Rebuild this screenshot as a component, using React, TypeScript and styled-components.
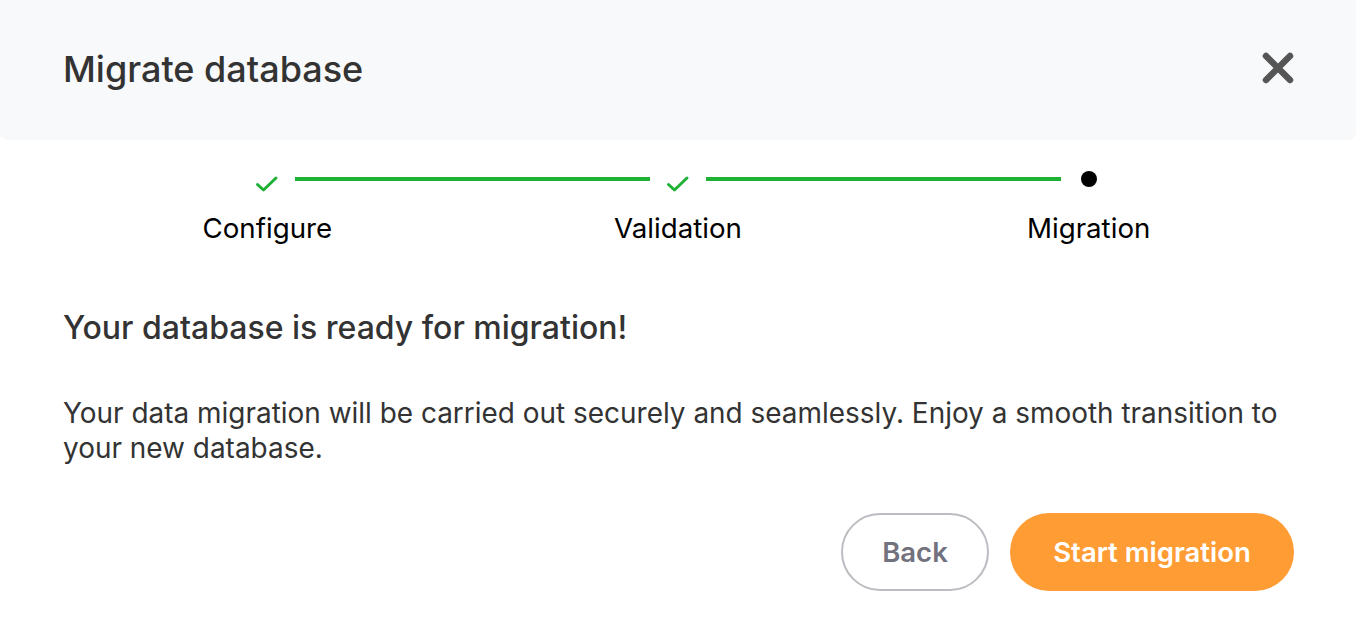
import React from "react";
import styled, { createGlobalStyle } from "styled-components";

const Global = createGlobalStyle`
  html, body { margin: 0; padding: 0; background: #ffffff; }
  body { font-family: Inter, "Noto Sans", sans-serif; -webkit-font-smoothing: antialiased; }
  * { box-sizing: border-box; }
`;

const Dialog = styled.div`
  width: 1356px;
  height: 618px;
  background: #fff;
  display: flex;
  flex-direction: column;
`;

const Header = styled.header`
  height: 140px;
  flex: none;
  background: #f8f9fa;
  border-radius: 0 0 8px 8px;
  display: flex;
  align-items: center;
  justify-content: space-between;
  padding: 0 61px 0 63px;
`;

const Title = styled.h1`
  margin: 0;
  font-size: 36px;
  font-weight: 500;
  color: #333333;
  line-height: 44px;
  padding-bottom: 2px;
`;

const CloseButton = styled.button`
  border: none;
  background: none;
  padding: 0;
  width: 34px;
  height: 34px;
  display: flex;
  align-items: center;
  justify-content: center;
  cursor: pointer;
  margin-bottom: 4px;
`;

const Body = styled.div`
  padding: 0 62px;
  display: flex;
  flex-direction: column;
`;

const Stepper = styled.ol`
  list-style: none;
  margin: 0;
  padding: 0;
  display: grid;
  grid-template-columns: repeat(3, 1fr);
  margin-top: 25px;
`;

const Step = styled.li`
  position: relative;
  display: flex;
  flex-direction: column;
  align-items: center;
`;

const IconWrap = styled.div`
  height: 28px;
  width: 40px;
  display: flex;
  align-items: center;
  justify-content: center;
`;

const Connector = styled.div`
  position: absolute;
  top: 12px;
  left: calc(50% + 28px);
  right: calc(-50% + 28px);
  height: 4px;
  background: #1fb136;
`;

const Dot = styled.span`
  width: 16px;
  height: 16px;
  border-radius: 50%;
  background: #000;
`;

const StepLabel = styled.span`
  margin-top: 18px;
  font-size: 27.7px;
  font-weight: 400;
  color: #000;
  line-height: 34px;
  white-space: nowrap;
`;

const Heading = styled.h2`
  margin: 63px 0 0 1px;
  font-size: 32px;
  font-weight: 500;
  color: #333333;
  line-height: 40px;
`;

const Paragraph = styled.p`
  margin: 47.5px 0 0 1px;
  font-size: 27.95px;
  line-height: 35px;
  color: #333333;
  font-weight: 400;
`;

const Actions = styled.div`
  display: flex;
  justify-content: flex-end;
  gap: 21px;
  margin-top: 47.5px;
`;

const Button = styled.button<{ $primary?: boolean }>`
  height: 78px;
  border-radius: 39px;
  font-family: Inter, "Noto Sans", sans-serif;
  font-size: 27.5px;
  font-weight: 600;
  cursor: pointer;
  padding: 0 30px;
  border: ${(p) => (p.$primary ? "none" : "2px solid #bcbcc2")};
  background: ${(p) => (p.$primary ? "#ff9c33" : "#ffffff")};
  color: ${(p) => (p.$primary ? "#ffffff" : "#72727e")};
  width: ${(p) => (p.$primary ? "284px" : "148px")};
`;

const Check = () => (
  <svg width="24" height="18" viewBox="0 0 24 18" style={{ marginTop: 10 }}>
    <path d="M2.5 9.5 L8.5 15 L21 3" fill="none" stroke="#1fb136" strokeWidth="3" strokeLinecap="round" strokeLinejoin="round" />
  </svg>
);

const steps = [
  { label: "Configure", done: true },
  { label: "Validation", done: true },
  { label: "Migration", done: false },
];

export default function App() {
  return (
    <>
      <Global />
      <Dialog>
        <Header>
          <Title>Migrate database</Title>
          <CloseButton aria-label="Close">
            <svg width="34" height="34" viewBox="0 0 34 34">
              <path d="M5 5 L29 29 M29 5 L5 29" stroke="#555555" strokeWidth="6.5" strokeLinecap="round" />
            </svg>
          </CloseButton>
        </Header>
        <Body>
          <Stepper>
            {steps.map((s, i) => (
              <Step key={s.label}>
                <IconWrap>{s.done ? <Check /> : <Dot />}</IconWrap>
                {i < steps.length - 1 && <Connector />}
                <StepLabel>{s.label}</StepLabel>
              </Step>
            ))}
          </Stepper>
          <Heading>Your database is ready for migration!</Heading>
          <Paragraph>
            Your data migration will be carried out securely and seamlessly. Enjoy a smooth transition to your new database.
          </Paragraph>
          <Actions>
            <Button>Back</Button>
            <Button $primary>Start migration</Button>
          </Actions>
        </Body>
      </Dialog>
    </>
  );
}
